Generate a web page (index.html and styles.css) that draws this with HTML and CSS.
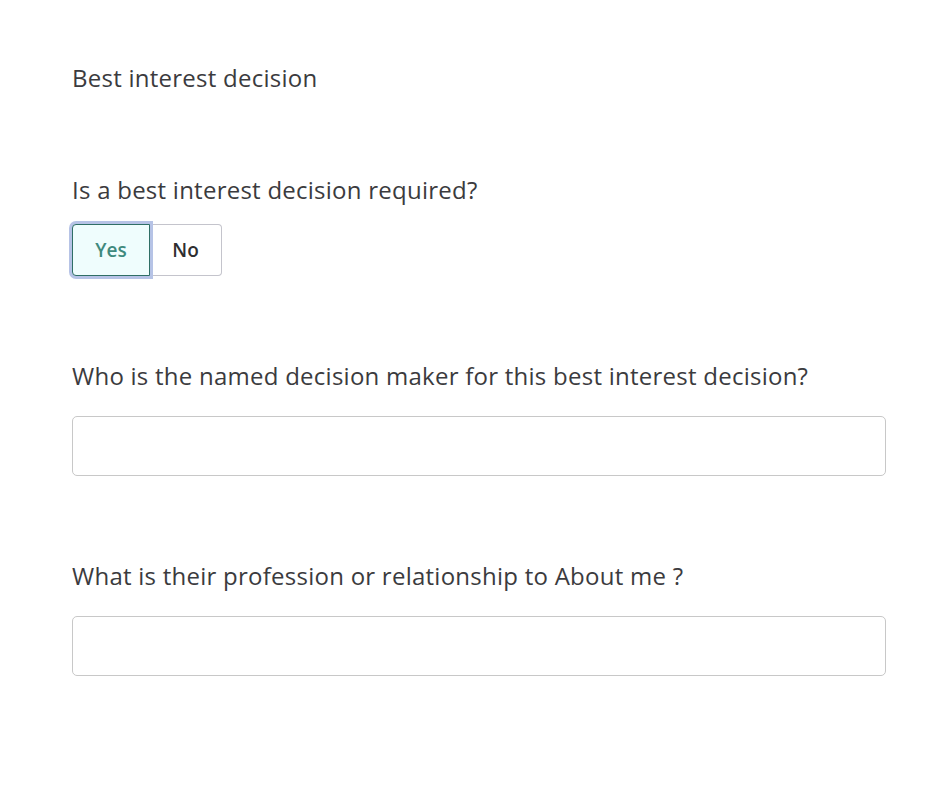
FILE: index.html
```html
<!DOCTYPE html>
<html>
<head>
<meta charset="utf-8">
<link rel="stylesheet" href="styles.css">
</head>
<body>
<main class="form">
  <h1 class="title">Best interest decision</h1>
  <section class="field field-first">
    <label class="question">Is a best interest decision required?</label>
    <div class="toggle">
      <button class="opt opt-yes">Yes</button>
      <button class="opt opt-no">No</button>
    </div>
  </section>
  <section class="field">
    <label class="question">Who is the named decision maker for this best interest decision?</label>
    <input class="text-input" type="text">
  </section>
  <section class="field">
    <label class="question">What is their profession or relationship to About me ?</label>
    <input class="text-input" type="text">
  </section>
</main>
</body>
</html>
```
FILE: styles.css
```css
html, body {
  margin: 0;
  padding: 0;
  background: #ffffff;
}
body {
  font-family: "Open Sans", "Noto Sans", sans-serif;
  color: #3b3b3e;
}
.form {
  padding: 63px 52px 0 72px;
  display: flex;
  flex-direction: column;
}
.title {
  margin: 0;
  font-size: 24px;
  letter-spacing: 0.25px;
  font-weight: 400;
  line-height: 30px;
}
.field {
  display: flex;
  flex-direction: column;
  margin-top: 85px;
}
.field-first {
  margin-top: 82px;
}
.question {
  font-size: 24px;
  letter-spacing: 0.25px;
  line-height: 30px;
  margin-bottom: 25px;
}
.field-first .question {
  margin-bottom: 19px;
}
.toggle {
  display: flex;
}
.opt {
  font-family: inherit;
  font-size: 19px;
  font-weight: 600;
  height: 52px;
  padding: 0;
  background: #fff;
  cursor: pointer;
}
.opt-yes {
  width: 78px;
  background: #effdfd;
  color: #3f8a7e;
  border: 1px solid #2f6f66;
  border-radius: 4px 0 0 4px;
  box-shadow: 0 0 0 3px #b6c3e6;
  position: relative;
  z-index: 1;
}
.opt-no {
  width: 72px;
  color: #2e2e30;
  border: 1px solid #c4c4cc;
  border-left: none;
  border-radius: 0 4px 4px 0;
}
.text-input {
  height: 60px;
  box-sizing: border-box;
  width: 814px;
  border: 1px solid #c8c8c8;
  border-radius: 5px;
  background: #fff;
  font-size: 20px;
  padding: 0 12px;
}
```
